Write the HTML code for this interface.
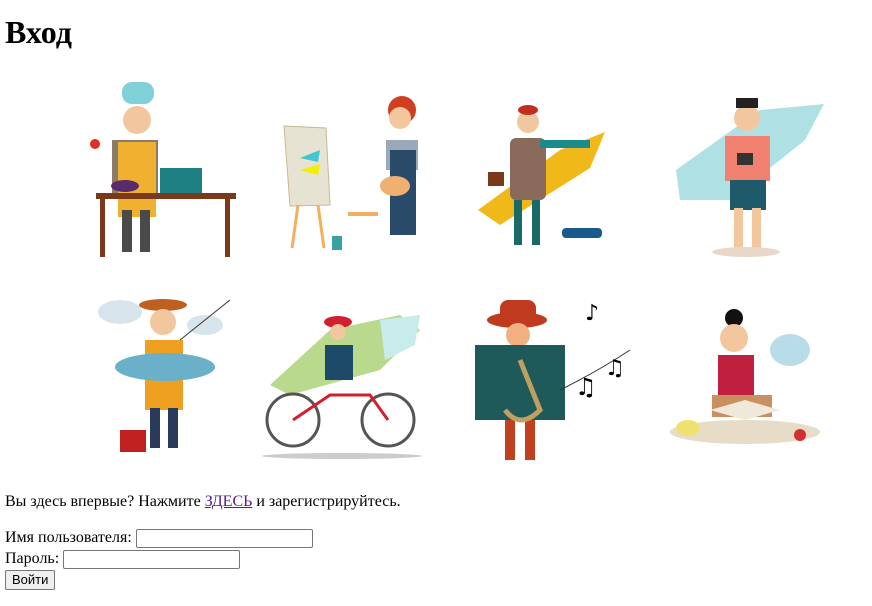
<!DOCTYPE html>
<html><head><meta charset="utf-8"><style>
body{margin:0;background:#fff;font-family:"Liberation Serif",serif;font-size:16px;color:#000;width:872px;height:606px;overflow:hidden;position:relative}
h1{position:absolute;left:5px;top:14px;margin:0;font-size:32px;font-weight:bold}
#p{position:absolute;left:5px;top:493px;margin:0}
a{color:#551a8b}
#f{position:absolute;left:5px;top:527px;line-height:21px}
input[type=text],input[type=password]{width:171px;height:17px;border:1px solid #767676;border-radius:2px;padding:0 2px;margin:0;vertical-align:middle}
button{font-family:"Liberation Sans",sans-serif;font-size:13px;height:20px;padding:0 6px;border:1px solid #767676;border-radius:2px;background:#efefef}
svg{position:absolute;left:0;top:0}
</style></head><body>
<h1>Вход</h1>
<svg width="872" height="480" viewBox="0 0 872 480">
<!-- chef -->
<rect x="122" y="82" width="32" height="22" rx="10" fill="#7fd0d8"/>
<circle cx="137" cy="120" r="14" fill="#f3c79e"/>
<rect x="112" y="140" width="46" height="55" fill="#8b7b6b"/>
<rect x="118" y="142" width="38" height="75" fill="#f0b030"/>
<rect x="122" y="210" width="10" height="42" fill="#4a4a4a"/><rect x="140" y="210" width="10" height="42" fill="#4a4a4a"/>
<rect x="96" y="193" width="140" height="6" fill="#7a3a1a"/>
<rect x="100" y="199" width="5" height="58" fill="#7a3a1a"/><rect x="225" y="199" width="5" height="58" fill="#7a3a1a"/>
<rect x="160" y="168" width="42" height="25" fill="#1e8080"/>
<ellipse cx="125" cy="186" rx="14" ry="6" fill="#5a2a6a"/>
<circle cx="95" cy="144" r="5" fill="#e03020"/>
<!-- painter -->
<polygon points="284,126 326,128 330,205 290,206" fill="#e6e3d3" stroke="#c8b890"/>
<polygon points="300,158 320,150 318,162" fill="#40c8d0"/>
<polygon points="300,170 320,164 318,175" fill="#f0f000"/>
<line x1="298" y1="205" x2="292" y2="248" stroke="#f0b060" stroke-width="3"/><line x1="318" y1="205" x2="324" y2="248" stroke="#f0b060" stroke-width="3"/>
<circle cx="402" cy="110" r="14" fill="#d04020"/><circle cx="400" cy="118" r="11" fill="#f3c79e"/>
<rect x="386" y="140" width="32" height="30" fill="#9aa8b8"/>
<rect x="390" y="150" width="26" height="85" fill="#2a4a6a"/>
<ellipse cx="395" cy="186" rx="15" ry="10" fill="#f0b070"/>
<rect x="332" y="236" width="10" height="14" fill="#3aa0a0"/>
<rect x="348" y="212" width="30" height="4" fill="#f0b060"/>
<!-- woman scarf -->
<polygon points="478,210 560,150 605,132 590,168 500,225" fill="#f0b818"/>
<circle cx="528" cy="122" r="11" fill="#f0c8a0"/><ellipse cx="528" cy="110" rx="10" ry="5" fill="#c03020"/>
<rect x="510" y="138" width="36" height="62" rx="6" fill="#8a6a5a"/>
<rect x="514" y="200" width="8" height="45" fill="#1a6a6a"/><rect x="532" y="200" width="8" height="45" fill="#1a6a6a"/>
<rect x="540" y="140" width="50" height="8" fill="#1a8a8a"/>
<rect x="488" y="172" width="16" height="14" fill="#7a3a1a"/>
<rect x="562" y="228" width="40" height="10" rx="4" fill="#1a5a8a"/>
<!-- photographer -->
<polygon points="676,170 760,110 824,104 805,140 730,200 680,200" fill="#aee0e4"/>
<circle cx="747" cy="118" r="13" fill="#f3c79e"/><rect x="736" y="98" width="22" height="10" fill="#222"/>
<rect x="725" y="136" width="45" height="45" fill="#f08070"/>
<rect x="730" y="180" width="36" height="30" fill="#1e5a6a"/>
<rect x="734" y="208" width="9" height="40" fill="#f3c79e"/><rect x="752" y="208" width="9" height="40" fill="#f3c79e"/>
<ellipse cx="746" cy="252" rx="34" ry="5" fill="#e8d8c8"/>
<rect x="737" y="153" width="16" height="12" fill="#333"/>
<!-- fisherman -->
<ellipse cx="120" cy="312" rx="22" ry="12" fill="#d8e4ec"/><ellipse cx="205" cy="325" rx="18" ry="10" fill="#d8e4ec"/>
<ellipse cx="163" cy="305" rx="24" ry="6" fill="#c06020"/>
<circle cx="163" cy="322" r="13" fill="#f3c79e"/>
<rect x="145" y="340" width="38" height="70" fill="#f0a020"/>
<ellipse cx="165" cy="367" rx="50" ry="14" fill="#6ab0c8"/>
<rect x="150" y="408" width="10" height="40" fill="#2a3a5a"/><rect x="168" y="408" width="10" height="40" fill="#2a3a5a"/>
<rect x="120" y="430" width="26" height="22" fill="#c02020"/>
<line x1="180" y1="340" x2="230" y2="300" stroke="#333" stroke-width="1"/>
<!-- cyclist -->
<polygon points="270,385 330,330 400,315 420,330 380,370 290,395" fill="#a8d070" opacity=".8"/>
<polygon points="380,320 420,315 415,345 385,360" fill="#c8ecec"/>
<circle cx="293" cy="420" r="26" fill="none" stroke="#555" stroke-width="3"/>
<circle cx="388" cy="420" r="26" fill="none" stroke="#555" stroke-width="3"/>
<polyline points="293,420 330,395 370,395 388,420" fill="none" stroke="#d02030" stroke-width="3"/>
<ellipse cx="338" cy="322" rx="14" ry="6" fill="#d02030"/>
<rect x="325" y="345" width="28" height="35" fill="#1e4a6a"/>
<circle cx="338" cy="332" r="8" fill="#f3c79e"/>
<ellipse cx="342" cy="456" rx="80" ry="3" fill="#ccc"/>
<!-- sax -->
<ellipse cx="517" cy="320" rx="30" ry="8" fill="#c03a20"/>
<rect x="500" y="300" width="36" height="22" rx="8" fill="#c03a20"/>
<circle cx="518" cy="335" r="12" fill="#f0b080"/>
<rect x="475" y="345" width="90" height="75" fill="#1e5a5a"/>
<rect x="505" y="420" width="10" height="40" fill="#c04020"/><rect x="525" y="420" width="10" height="40" fill="#c04020"/>
<path d="M520 360 L540 410 Q520 430 505 410" fill="none" stroke="#c0a060" stroke-width="5"/>
<path d="M560 390 Q600 370 630 350" stroke="#333" fill="none"/>
<text x="585" y="320" font-size="22" font-family="DejaVu Sans">♪</text><text x="575" y="395" font-size="24" font-family="DejaVu Sans">♫</text><text x="605" y="375" font-size="22" font-family="DejaVu Sans">♫</text>
<!-- reader -->
<ellipse cx="790" cy="350" rx="20" ry="16" fill="#b8dce8"/>
<circle cx="734" cy="318" r="9" fill="#111"/>
<circle cx="734" cy="338" r="14" fill="#f3c79e"/>
<rect x="718" y="355" width="36" height="40" fill="#c02040"/>
<ellipse cx="745" cy="432" rx="75" ry="12" fill="#e6dcc8"/>
<rect x="712" y="395" width="60" height="22" fill="#c89060"/>
<polygon points="710,410 745,400 780,410 745,420" fill="#f0e8d8"/>
<circle cx="800" cy="435" r="6" fill="#d03030"/>
<ellipse cx="688" cy="428" rx="12" ry="8" fill="#f0e070"/>
</svg>
<p id="p">Вы здесь впервые? Нажмите <a href="#">ЗДЕСЬ</a> и зарегистрируйтесь.</p>
<div id="f">Имя пользователя: <input type="text"><br>Пароль: <input type="password"><br><button>Войти</button></div>
</body></html>
